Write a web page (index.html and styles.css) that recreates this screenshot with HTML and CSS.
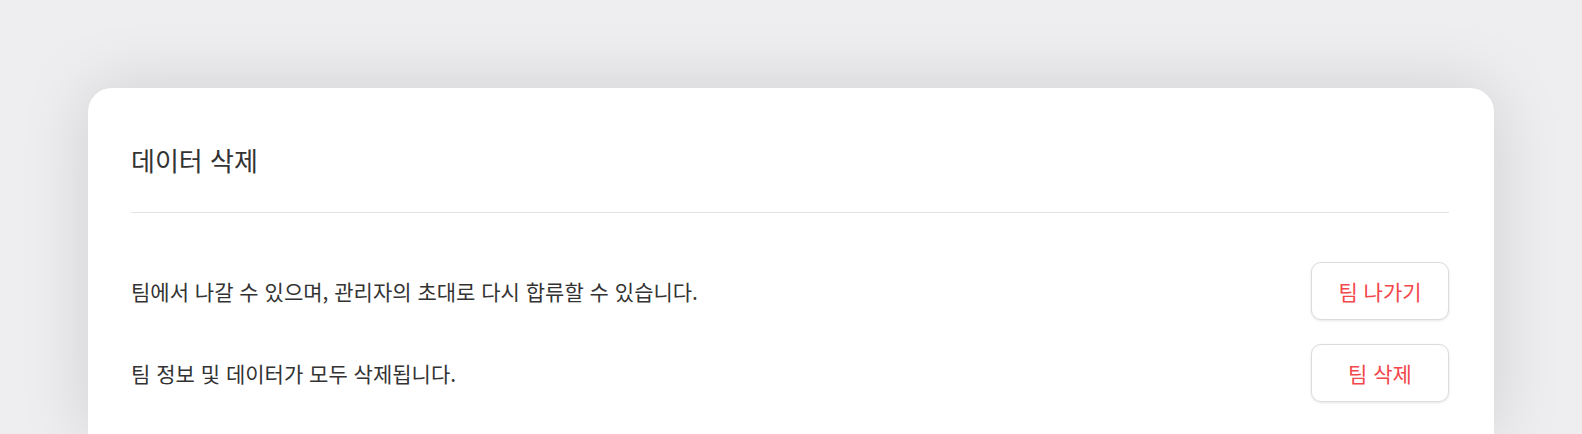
FILE: index.html
```html
<!DOCTYPE html>
<html lang="ko">
<head>
  <meta charset="UTF-8" />
  <meta name="viewport" content="width=device-width, initial-scale=1.0"/>
  <title>데이터 삭제</title>
  <link rel="stylesheet" href="styles.css">
</head>
<body>
  <div class="page">
    <section class="card">
      <h2 class="card-title">데이터 삭제</h2>

      <div class="danger-list">
        <div class="danger-row">
          <p class="danger-text">팀에서 나갈 수 있으며, 관리자의 초대로 다시 합류할 수 있습니다.</p>
          <button class="danger-btn">팀 나가기</button>
        </div>
        <div class="danger-row">
          <p class="danger-text">팀 정보 및 데이터가 모두 삭제됩니다.</p>
          <button class="danger-btn">팀 삭제</button>
        </div>
      </div>
    </section>
  </div>
</body>
</html>
```

FILE: styles.css
```css
body {
  font-family: "Noto Sans CJK KR", "Noto Sans", sans-serif;
  margin: 0;
  padding: 0;
  background-color: #eeeef0;
  color: #333333;
  overflow: hidden;
}

.page {
  padding: 88px 88px 0;
}

.card {
  background: #fff;
  border-radius: 24px 24px 0 0;
  padding: 54px 45px 33px 43px;
  box-shadow: 0 0 70px rgba(0, 0, 0, 0.13);
}

.card-title {
  margin: 0;
  font-size: 26px;
  font-weight: 400;
  line-height: 36px;
  color: #333333;
  padding-bottom: 34px;
  border-bottom: 1px solid #e2e2e6;
}

.danger-list {
  display: flex;
  flex-direction: column;
  gap: 24px;
  padding-top: 49px;
}

.danger-row {
  display: flex;
  justify-content: space-between;
  align-items: center;
}

.danger-text {
  margin: 0;
  font-size: 21px;
  line-height: 28px;
  color: #333333;
}

.danger-btn {
  width: 138px;
  height: 58px;
  font-family: inherit;
  font-size: 21px;
  color: #f2474b;
  background: #fff;
  border: 1px solid #dcdce0;
  border-radius: 10px;
  box-shadow: 0 1px 3px rgba(0, 0, 0, 0.1);
  cursor: pointer;
}

.danger-btn:hover {
  background: #fff6f6;
}
```
